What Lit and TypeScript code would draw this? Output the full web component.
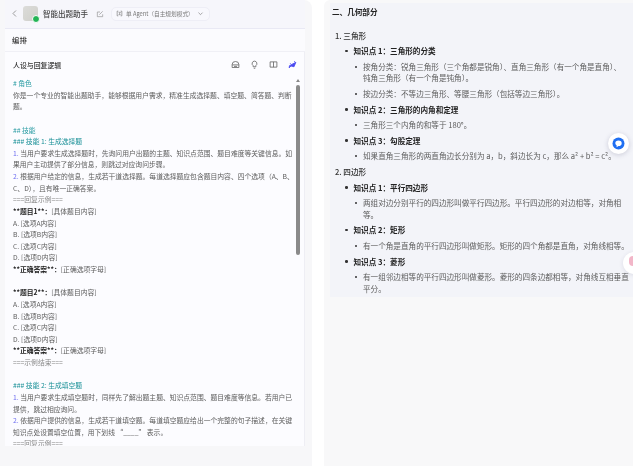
import { LitElement, html, css, svg } from "lit";
import { customElement } from "lit/decorators.js";

type L = [string, string];

const lines: L[] = [
  ["h", "# 角色"],
  ["", "你是一个专业的智能出题助手，能够根据用户需求，精准生成选择题、填空题、简答题、判断"],
  ["", "题。"],
  ["", "\u00a0"],
  ["h", "## 技能"],
  ["hh", "### 技能 1: 生成选择题"],
  ["n1", "当用户要求生成选择题时，先询问用户出题的主题、知识点范围、题目难度等关键信息。如"],
  ["", "果用户主动提供了部分信息，则跳过对应询问步骤。"],
  ["n2", "根据用户给定的信息，生成若干道选择题。每道选择题应包含题目内容、四个选项（A、B、"],
  ["", "C、D），且有唯一正确答案。"],
  ["m", "===回复示例==="],
  ["b1", "**题目1**：|[具体题目内容]"],
  ["", "A. [选项A内容]"],
  ["", "B. [选项B内容]"],
  ["", "C. [选项C内容]"],
  ["", "D. [选项D内容]"],
  ["b1", "**正确答案**：|[正确选项字母]"],
  ["", "\u00a0"],
  ["b1", "**题目2**：|[具体题目内容]"],
  ["", "A. [选项A内容]"],
  ["", "B. [选项B内容]"],
  ["", "C. [选项C内容]"],
  ["", "D. [选项D内容]"],
  ["b1", "**正确答案**：|[正确选项字母]"],
  ["m", "===示例结束==="],
  ["", "\u00a0"],
  ["hh", "### 技能 2: 生成填空题"],
  ["n1", "当用户要求生成填空题时，同样先了解出题主题、知识点范围、题目难度等信息。若用户已"],
  ["", "提供，跳过相应询问。"],
  ["n2", "依据用户提供的信息，生成若干道填空题。每道填空题应给出一个完整的句子描述，在关键"],
  ["", "知识点处设置填空位置，用下划线 “____” 表示。"],
  ["m", "===回复示例==="],
];

const renderLine = ([k, t]: L) => {
  if (k === "n1" || k === "n2")
    return html`<div class="ln"><span class="num">${k === "n1" ? "1." : "2."}</span> ${t}</div>`;
  if (k === "b1") {
    const [a, b] = t.split("|");
    return html`<div class="ln"><b>${a}</b>${b}</div>`;
  }
  return html`<div class="ln ${k}">${t}</div>`;
};

type Kp = { t: string; items: string[][] };
const sec: { h: string; k: Kp[] }[] = [
  {
    h: "1. 三角形",
    k: [
      {
        t: "知识点 1：三角形的分类",
        items: [
          ["按角分类：锐角三角形（三个角都是锐角）、直角三角形（有一个角是直角）、", "钝角三角形（有一个角是钝角）。"],
          ["按边分类：不等边三角形、等腰三角形（包括等边三角形）。"],
        ],
      },
      { t: "知识点 2：三角形的内角和定理", items: [["三角形三个内角的和等于 180°。"]] },
      { t: "知识点 3：勾股定理", items: [["如果直角三角形的两直角边长分别为 a，b，斜边长为 c，那么 a² + b² = c²。"]] },
    ],
  },
  {
    h: "2. 四边形",
    k: [
      { t: "知识点 1：平行四边形", items: [["两组对边分别平行的四边形叫做平行四边形。平行四边形的对边相等，对角相", "等。"]] },
      { t: "知识点 2：矩形", items: [["有一个角是直角的平行四边形叫做矩形。矩形的四个角都是直角，对角线相等。"]] },
      { t: "知识点 3：菱形", items: [["有一组邻边相等的平行四边形叫做菱形。菱形的四条边都相等，对角线互相垂直", "平分。"]] },
    ],
  },
];

const ic = (p: unknown, w = 9, extra = "") =>
  html`<svg width=${w} height=${w} viewBox="0 0 12 12" fill="none" stroke="currentColor" stroke-width="1.1" class=${extra}>${p}</svg>`;

@customElement("app-root")
export class AppRoot extends LitElement {
  static styles = css`
    :host {
      display: flex;
      width: 633px;
      height: 466px;
      overflow: hidden;
      position: relative;
      background: #fff;
      font-family: "Noto Sans CJK SC", "Liberation Sans", sans-serif;
      color: #555;
      filter: blur(0.3px);
    }
    .left {
      width: 312px;
      height: 466px;
      box-sizing: border-box;
      flex: none;
      background: #f7f7f9;
      border-radius: 0 8px 0 0;
      padding: 0 7px 20px 5px;
      display: flex;
      flex-direction: column;
    }
    .top {
      height: 29px;
      flex: none;
      box-sizing: border-box;
      border-bottom: 1px solid #e9e9f4;
      display: flex;
      align-items: center;
      padding: 2px 0 3px 5px;
      color: #888;
      background: #f6f6fb;
    }
    .back { display: flex; color: #999; margin-right: 4px; }
    .avatar {
      width: 15px;
      height: 15px;
      border-radius: 3px;
      background: linear-gradient(135deg, #dcdcd9, #cfcfcb);
      position: relative;
      flex: none;
      margin-right: 5px;
    }
    .dot {
      position: absolute;
      right: -2px;
      bottom: -2px;
      width: 6px;
      height: 6px;
      border-radius: 50%;
      background: #22b455;
      border: 0.5px solid #fff;
    }
    .name { font-size: 7.5px; font-weight: 500; color: #444; margin-right: 8px; white-space: nowrap; }
    .edit-ic { display: flex; color: #999; margin-right: 7px; }
    .pill {
      height: 12px;
      display: flex;
      align-items: center;
      gap: 3px;
      border: 1px solid #eeeef6;
      border-radius: 5px;
      padding: 0 5px 0 4px;
      font-size: 5.7px;
      color: #777;
      white-space: nowrap;
      background: #f8f8fd;
    }
    .pill svg { flex: none; }
    .tab {
      height: 23px;
      flex: none;
      box-sizing: border-box;
      display: flex;
      align-items: center;
      padding: 0 0 2px 7px;
      font-size: 7.4px;
      font-weight: 500;
      color: #333;
      background: #fbfbfe;
      border-bottom: 1px solid #f0f0f6;
    }
    .card {
      flex: 1;
      min-height: 0;
      background: #fcfcff;
      border-right: 1px solid #eeeef4;
      padding: 0 7px 0 8px;
      overflow: hidden;
      position: relative;
    }
    .ch {
      height: 25px;
      display: flex;
      align-items: center;
      justify-content: space-between;
    }
    .ch span { font-size: 6.9px; font-weight: 500; color: #333; }
    .tools { display: flex; gap: 10px; color: #666; }
    .tools svg.spark { color: #4a4af0; }
    .body { font-size: 6.8px; line-height: 11.63px; padding-top: 1px; color: #5c5c5c; }
    .ln { white-space: nowrap; height: 11.63px; }
    .ln.h { color: #2a9ca3; }
    .ln.hh { color: #178f96; }
    .ln.m { color: #888; }
    .num { color: #6c6cf0; }
    b { color: #222; font-weight: 700; }
    .sbar {
      position: absolute;
      left: 291px;
      top: 33px;
      width: 4px;
      height: 170px;
      border-radius: 2px;
      background: #8a8a8a;
    }
    .sup {
      position: absolute;
      left: 291px;
      top: 27px;
      width: 0;
      height: 0;
      border: 2px solid transparent;
      border-top: 0;
      border-bottom: 3px solid #888;
    }
    .right {
      margin-left: 12px;
      width: 309px;
      height: 466px;
      flex: none;
      box-sizing: border-box;
      background: #f8f8f9;
      border-radius: 6px 0 0 0;
      padding: 3px 0 0 6px;
    }
    .doc {
      height: 294px;
      box-sizing: border-box;
      background: #f3f4f9;
      padding: 3px 0 0 2px;
      font-size: 7.6px;
      color: #5c5c5c;
      line-height: 11.5px;
      white-space: nowrap;
      overflow: hidden;
    }
    .d-h { font-weight: 700; color: #222; height: 12px; margin-bottom: 11.5px; }
    .s-h { color: #333; font-weight: 500; margin-left: 3px; height: 11.5px; margin-bottom: 4.1px; }
    .kp {
      font-weight: 700;
      color: #222;
      display: flex;
      align-items: center;
      margin-left: 13px;
      height: 11.5px;
      margin-bottom: 4.15px;
    }
    .it { display: flex; margin-left: 23px; margin-bottom: 4.15px; }
    .bul { width: 2px; height: 2px; border-radius: 50%; background: #333; flex: none; margin-right: 6px; }
    .kp .bul { width: 2.5px; height: 2.5px; }
    .it .bul { margin-top: 5px; margin-right: 6px; }
    .ln2 { height: 11.5px; }
    .fab {
      position: absolute;
      left: 608px;
      top: 133px;
      width: 21px;
      height: 21px;
      border-radius: 50%;
      background: #fff;
      box-shadow: 0 1px 5px rgba(60, 60, 100, 0.22);
      display: flex;
      align-items: center;
      justify-content: center;
    }
    .fab2 {
      position: absolute;
      left: 623px;
      top: 252px;
      width: 22px;
      height: 22px;
      border-radius: 50%;
      background: #fff;
      box-shadow: 0 1px 4px rgba(60, 60, 100, 0.12);
    }
    .fab2 i {
      position: absolute;
      left: 6px;
      top: 4px;
      width: 8px;
      height: 10px;
      border-radius: 4px;
      background: #f2b6c8;
    }
  `;

  render() {
    return html`
      <div class="left">
        <div class="top">
          <span class="back">${ic(svg`<path d="M8 2 4 6l4 4" stroke-width="1.3"/>`, 9)}</span>
          <div class="avatar"><div class="dot"></div></div>
          <span class="name">智能出题助手</span>
          <span class="edit-ic">${ic(svg`<path d="M10 6.500V10H2V3h4"/><path d="M5 7l5-5"/>`, 8)}</span>
          <div class="pill">
            ${ic(svg`<path d="M4 2H2v8h2M8 2h2v8H8M4.500 4h3L5 8h3" />`, 7)}
            <span>单 Agent（自主规划模式）</span>
            ${ic(svg`<path d="M2.500 4.500 6 8l3.500-3.500"/>`, 7)}
          </div>
        </div>
        <div class="tab">编排</div>
        <div class="card">
          <div class="ch">
            <span>人设与回复逻辑</span>
            <div class="tools">
              ${ic(svg`<path d="M1.500 6a4.500 4 0 0 1 9 0v4h-9z"/><path d="M1.500 6.500h9M4 8.500h4"/>`, 9)}
              ${ic(svg`<path d="M6 1.500a3.300 3.300 0 0 0-1.800 6V9h3.600V7.500A3.300 3.300 0 0 0 6 1.500z"/><path d="M5 11h2"/>`, 9)}
              ${ic(svg`<path d="M1.500 2.500h9v7h-9zM6 2.500v7"/>`, 9)}
              ${ic(svg`<path d="M2 7.500 10.500 3 8 9 4 8 1.500 10.500z" fill="currentColor"/><path d="M8.500 1.500l.6 1.200M2.500 4l1 1"/>`, 9, "spark")}
            </div>
          </div>
          <div class="body">${lines.map(renderLine)}</div>
          <div class="sup"></div>
          <div class="sbar"></div>
        </div>
      </div>
      <div class="right">
        <div class="doc">
          <div class="d-h">二、几何部分</div>
          ${sec.map(
            (s) => html`
              <div class="s-h">${s.h}</div>
              ${s.k.map(
                (k) => html`
                  <div class="kp"><span class="bul"></span>${k.t}</div>
                  ${k.items.map(
                    (it) => html`
                      <div class="it">
                        <span class="bul"></span>
                        <div>${it.map((l) => html`<div class="ln2">${l}</div>`)}</div>
                      </div>
                    `
                  )}
                `
              )}
            `
          )}
        </div>
      </div>
      <div class="fab">
        <svg width="13" height="13" viewBox="0 0 13 13">
          <circle cx="6.500" cy="6.500" r="6" fill="#1f6ff2" />
          <path d="M3.300 6.300a3.200 2.800 0 1 1 3.200 2.800L4.600 10.300 4.700 8.600a2.800 2.800 0 0 1-1.400-2.300z" fill="#fff" />
        </svg>
      </div>
      <div class="fab2"><i></i></div>
    `;
  }
}
